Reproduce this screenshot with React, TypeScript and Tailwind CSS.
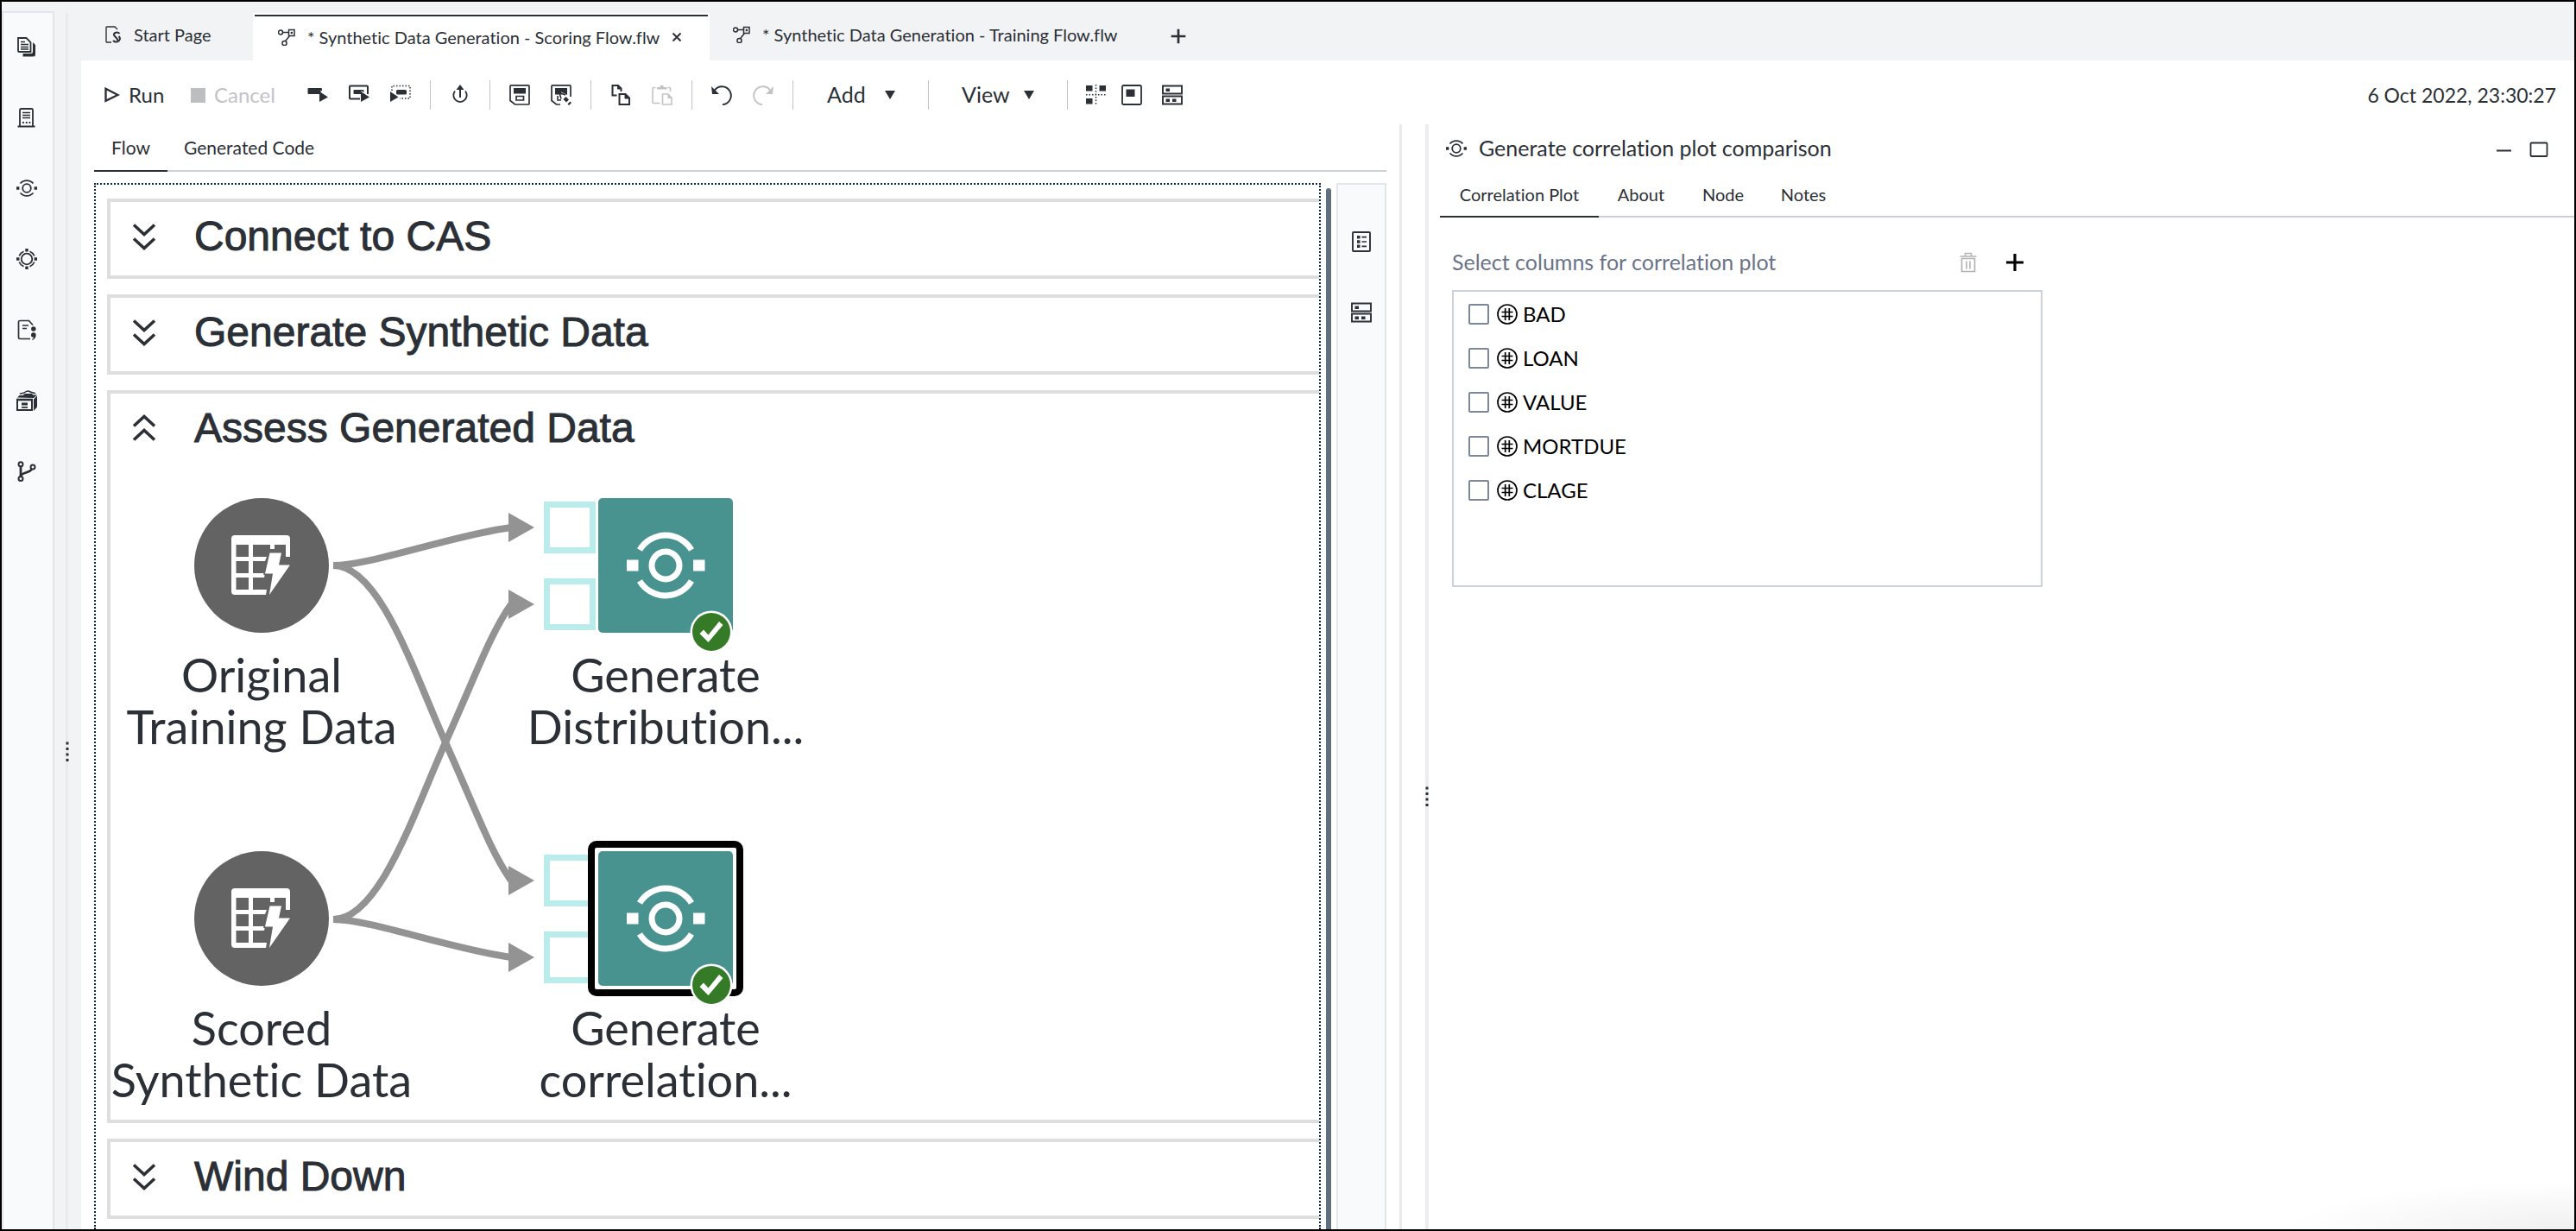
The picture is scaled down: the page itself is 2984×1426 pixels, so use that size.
import React from "react";

type IconProps = { className?: string };

const Svg = ({
  children,
  className = "size-6",
  box = "0 0 24 24",
}: {
  children: React.ReactNode;
  className?: string;
  box?: string;
}) => (
  <svg viewBox={box} className={`shrink-0 ${className}`} fill="none" stroke="currentColor" strokeWidth="2" aria-hidden="true">
    {children}
  </svg>
);

/* Rail icons */
const DocsIcon = () => (
  <Svg>
    <path d="M19 7l3 3v11a2.500 2.500 0 0 1-2.500 2.500H7.500V20H17a2 2 0 0 0 2-2z" fill="currentColor" stroke="none" />
    <path d="M2 2h9.500l5 5v11H3a1 1 0 0 1-1-1z" strokeWidth="1.8" />
    <path d="M5 6.500h5M5 9.500h9M5 12.500h9M5 15h9" strokeWidth="1.500" />
  </Svg>
);
const ServerIcon = () => (
  <Svg>
    <path d="M4 22V3.500A1.500 1.500 0 0 1 5.500 2h12A1.500 1.500 0 0 1 19 3.500V22M1.500 22.500h20" strokeWidth="1.8" />
    <path d="M7 6.500h9M7 9.500h9M7 12.500h9" strokeWidth="1.600" />
    <path d="M7 18h1.800M10.800 18h1.800M14.500 18h1.800" strokeWidth="1.800" />
  </Svg>
);
const StepIcon = ({ className }: IconProps) => (
  <Svg className={className}>
    <circle cx="12" cy="12" r="4.800" strokeWidth="1.800" />
    <path d="M4.500 6.500a10 10 0 0 1 15 0M4.500 17.500a10 10 0 0 0 15 0" strokeWidth="1.800" />
    <path d="M0 10.300h3.400v3.400H0zM20.600 10.300H24v3.400h-3.400z" fill="currentColor" stroke="none" />
  </Svg>
);
const TargetIcon = () => (
  <Svg>
    <circle cx="12" cy="12" r="6.300" strokeWidth="1.800" />
    <path d="M3.200 8.500a9.500 9.500 0 0 1 5.300-5.300M15.500 3.200a9.500 9.500 0 0 1 5.300 5.300M3.200 15.500a9.500 9.500 0 0 0 5.300 5.300M15.500 20.800a9.500 9.500 0 0 0 5.300-5.300" strokeWidth="1.700" />
    <path d="M10.300 0h3.400v3.400h-3.400zM10.300 20.600h3.400V24h-3.400zM0 10.300h3.400v3.400H0zM20.600 10.300H24v3.400h-3.400z" fill="currentColor" stroke="none" />
  </Svg>
);
const SnippetIcon = () => (
  <Svg>
    <path d="M16 22.500H4A1.500 1.500 0 0 1 2.500 21V3A1.500 1.500 0 0 1 4 1.500h10.500l4.500 5" strokeWidth="1.700" />
    <path d="M7 7h7M7 10.500h5" strokeWidth="1.600" />
    <circle cx="19.800" cy="11" r="2.700" fill="currentColor" stroke="none" />
    <path d="M17 18a2.800 2.800 0 1 1 5.600 .3c0 2.800-1.600 4.800-4 5.700l-.6-1c1.300-.7 2-1.400 2-2.300a2.700 2.700 0 0 1-3-2.700z" fill="currentColor" stroke="none" />
  </Svg>
);
const DrawerIcon = () => (
  <Svg>
    <path d="M0 9.800h19V24H0zM20 24l4-4.500V6.500l-4 4z" fill="currentColor" stroke="none" />
    <path d="M1 8.500l2.500-2.500h4l2.500-2h8l1.500 1.500H24L20 9z" fill="currentColor" stroke="none" />
    <path d="M4 4.500c2-2 4-.5 5-1.500 2-2 5-2.500 7-1 2 1 4 .5 6 2" strokeWidth="1.500" />
    <path d="M2 12.300h15V22H2z" fill="#f9fafc" stroke="none" />
    <path d="M6 14.500h7v3H6zM6 19h7v1.700H6z" fill="currentColor" stroke="none" />
  </Svg>
);
const BranchIcon = () => (
  <Svg>
    <circle cx="5" cy="3.800" r="2.500" />
    <circle cx="5" cy="20.500" r="2.500" />
    <circle cx="19" cy="7" r="2.500" />
    <path d="M5 6v12" strokeWidth="2.800" />
    <path d="M5 17.500c1-5 11-3 13-8.500" strokeWidth="2.600" />
  </Svg>
);

/* Tab icons */
const StartIcon = () => (
  <Svg className="size-5" box="0 0 20 20">
    <path d="M8 19H3a1 1 0 0 1-1-1V2a1 1 0 0 1 1-1h9l3 3" strokeWidth="1.400" />
    <path d="M17.500 9c-2-2.500-7-1.500-6.500 1.500.4 2 5 4 4 6.500" strokeWidth="2" />
    <path d="M16.500 12c2.500 2 1.500 6-2 6.500-2 .3-3.500-.5-4.500-1.500" strokeWidth="2" />
  </Svg>
);
const FlowIcon = () => (
  <Svg className="size-5" box="0 0 20 20">
    <circle cx="3" cy="4.500" r="2.500" strokeWidth="1.500" />
    <circle cx="7.500" cy="17" r="2.600" strokeWidth="1.500" />
    <path d="M12.500 1.500h6.500v7h-6.500zM5.500 4.500h7M13.500 8.500l-5 6.200" strokeWidth="1.500" />
    <path d="M14.700 3.800h2.300v2.400h-2.300z" fill="currentColor" stroke="none" />
  </Svg>
);

/* Toolbar icons */
const RunNodeIcon = () => (
  <Svg>
    <path d="M1.500 4h14.500a1 1 0 0 1 1 1v2.500l-1.500-1V11H1.500a1 1 0 0 1-1-1V5a1 1 0 0 1 1-1z" fill="currentColor" stroke="none" />
    <path d="M14 8l10 6.500-10 5.500z" fill="currentColor" stroke="none" />
  </Svg>
);
const RunFromIcon = () => (
  <Svg>
    <path d="M13 16.500H2a1 1 0 0 1-1-1V2.500a1 1 0 0 1 1-1h19a1 1 0 0 1 1 1V11" />
    <path d="M6.500 6h10a1 1 0 0 1 1 1v2l-3-2v4h-8a1 1 0 0 1-1-1V7a1 1 0 0 1 1-1z" fill="currentColor" stroke="none" />
    <path d="M14 8l10 6.500L14 20z" fill="currentColor" stroke="none" />
  </Svg>
);
const RunSelIcon = () => (
  <Svg>
    <path d="M2 7V1.500h21V16H11" strokeWidth="1.500" strokeDasharray="1.500 2" />
    <rect x="7" y="6" width="12" height="5.500" rx="1.500" fill="currentColor" stroke="none" />
    <path d="M0 8l9.500 6.500L0 20z" fill="currentColor" stroke="none" />
  </Svg>
);
const ShareIcon = () => (
  <Svg>
    <path d="M6 7.500a7.700 7.700 0 1 0 12 0" strokeWidth="1.800" />
    <path d="M12 15V4" />
    <path d="M12 0l4.500 6h-9z" fill="currentColor" stroke="none" />
  </Svg>
);
const SaveIcon = () => (
  <Svg>
    <path d="M2 .9h20a1 1 0 0 1 1 1V22a1 1 0 0 1-1 1H6.500L1 18.500V2a1 1 0 0 1 1-1.100z" strokeWidth="1.700" />
    <path d="M5 4h14v6.500H5z" fill="currentColor" stroke="none" />
    <path d="M8 13.500h8.500v4.500H8z" strokeWidth="1.700" />
  </Svg>
);
const SaveAsIcon = () => (
  <Svg>
    <path d="M11 23H6.500L1 18.500V2a1 1 0 0 1 1-1.100h20a1 1 0 0 1 1 1V14" strokeWidth="1.700" />
    <path d="M5 4h14v8L12 8.500l1 3H5z" fill="currentColor" stroke="none" />
    <path d="M8 13v5h4M10 9.500l7 2.500M10 9.500l2 7" strokeWidth="1.600" />
    <path d="M17.500 14l3.500 3.500-3 3-3.500-3.500zM22.500 19.500l1.500 1.500-3 3-1.500-1.500z" fill="currentColor" stroke="none" />
  </Svg>
);
const CopyIcon = () => (
  <Svg>
    <path d="M7.500 12.500H2.500V1h6.500l3.500 3.500v3.500" />
    <path d="M10.500 11h7l4.500 4.500V23H10.500z" />
    <path d="M8.500 1v4h4zM17 11v5h5z" fill="currentColor" strokeWidth="1" />
  </Svg>
);
const PasteIcon = () => (
  <Svg>
    <path d="M9.500 21.500H2a1 1 0 0 1-1-1V4.500a1 1 0 0 1 1-1h2.500M18.500 3.500h2a1 1 0 0 1 1 1V8" strokeWidth="1.600" />
    <path d="M6 5.500V3h3.500a2.200 2.200 0 0 1 4.400 0h3.600v2.500z" fill="currentColor" stroke="none" />
    <path d="M12.500 11h6.500l4 4.500V23H12.500z" strokeWidth="1.600" />
    <path d="M18.500 11v5h4.500z" fill="currentColor" stroke="none" />
  </Svg>
);
const UndoIcon = ({ className = "size-6" }: IconProps) => (
  <Svg className={className}>
    <path d="M3.500 7a10.500 10.500 0 1 1 9.500 16.200" strokeWidth="1.900" />
    <path d="M0 2l1 9h8z" fill="currentColor" stroke="none" />
  </Svg>
);
const ArrangeIcon = () => (
  <Svg>
    <path d="M0 1h7.500v6.500H0zM15.500 1H23v6.500h-7.500zM0 16h7.500v6.500H0z" fill="currentColor" stroke="none" />
    <path d="M11.500 0v24M0 11.800h24" strokeWidth="1.500" strokeDasharray="1.500 2" />
  </Svg>
);
const FitIcon = () => (
  <Svg>
    <rect x="1" y="1" width="22" height="22" rx="1.500" strokeWidth="1.800" />
    <path d="M5.500 5.500H15.500V14H5.500z" fill="currentColor" stroke="none" />
  </Svg>
);
const RowsIcon = () => (
  <Svg>
    <path d="M1 1.500h22v9H1zM1 13.500h22v9H1z" strokeWidth="1.900" />
    <path d="M4.500 4.500h4.500v3.500H4.500zM4.500 16.500h4.500V20H4.500zM12 16.500h4.500V20H12z" fill="currentColor" stroke="none" />
  </Svg>
);
const ListIcon = () => (
  <Svg>
    <rect x="2" y="1" width="20" height="22" rx="1" strokeWidth="1.900" />
    <path d="M7 5h3.500v3.500H7zM7 10.300h3.500v3.500H7zM7 15.600h3.500v3.500H7z" fill="currentColor" stroke="none" />
    <path d="M12.500 6.700H18M12.500 12H18M12.500 17.400H18" strokeWidth="1.700" />
  </Svg>
);
const TrashIcon = () => (
  <Svg>
    <path d="M2.500 5h19M8.500 4.500V1.500h7v3" strokeWidth="1.600" />
    <path d="M4.500 7.500h15v15h-15z" strokeWidth="1.700" />
    <path d="M10 10.500v9M14 10.500v9" strokeWidth="1.600" />
  </Svg>
);
const PlusIcon = ({ className }: IconProps) => (
  <Svg className={className}>
    <path d="M12 2v20M2 12h20" strokeWidth="3.200" />
  </Svg>
);
const HashIcon = () => (
  <Svg>
    <circle cx="12" cy="12" r="11" strokeWidth="1.700" />
    <path d="M9.700 5v14M14.300 5v14M5.500 9.500h13M5.500 14.500h13" strokeWidth="1.700" />
  </Svg>
);
const Caret = () => (
  <Svg className="size-3" box="0 0 12 12">
    <path d="M0 1h12L6 11z" fill="currentColor" stroke="none" />
  </Svg>
);
const Dots = () => (
  <Svg className="h-6 w-1" box="0 0 4 24">
    <path d="M2 .5v3M2 7v3M2 13.500v3M2 20v3" strokeWidth="3" />
  </Svg>
);

const IconButton = ({ label, children, className = "" }: { label: string; children: React.ReactNode; className?: string }) => (
  <button type="button" aria-label={label} className={`grid size-6 shrink-0 place-items-center ${className}`}>
    {children}
  </button>
);

const Separator = () => <span className="h-[34px] w-px shrink-0 bg-[#bfc4cf]" />;

function Rail() {
  const items: [string, React.ReactNode][] = [
    ["Open items", <DocsIcon />],
    ["Servers", <ServerIcon />],
    ["Steps", <StepIcon />],
    ["Tasks", <TargetIcon />],
    ["Snippets", <SnippetIcon />],
    ["Libraries", <DrawerIcon />],
    ["Git repositories", <BranchIcon />],
  ];
  return (
    <nav aria-label="Navigation" className="mt-[11px] flex w-[61px] shrink-0 flex-col items-center gap-[58px] border-2 border-b-0 border-[#e3e5eb] bg-[#f9fafc] pt-[27px] pr-[3px]">
      {items.map(([label, icon]) => (
        <IconButton key={label} label={label}>
          {icon}
        </IconButton>
      ))}
    </nav>
  );
}

function FileTabs() {
  return (
    <div className="flex h-[68px] shrink-0 items-stretch text-[20px]">
      <button type="button" className="flex w-[199px] items-center gap-3.5 pt-2 pl-[27px]">
        <StartIcon />
        Start Page
      </button>
      <div className="mt-[13px] flex w-[529px] items-center border-x-2 border-t-2 border-white bg-white">
        <div className="flex h-full flex-1 items-center border-t-2 border-[#2b2f36] pb-1 pl-[27px]">
          <button type="button" className="flex items-center gap-3.5 whitespace-nowrap">
            <FlowIcon />
            * Synthetic Data Generation - Scoring Flow.flw
          </button>
          <button type="button" aria-label="Close tab" className="ml-3.5">
            <Svg className="size-3" box="0 0 12 12">
              <path d="M1.500 1.500l9 9M10.500 1.500l-9 9" />
            </Svg>
          </button>
        </div>
      </div>
      <button type="button" className="flex items-center gap-3.5 pt-2 pl-[27px] whitespace-nowrap">
        <FlowIcon />
        * Synthetic Data Generation - Training Flow.flw
      </button>
      <button type="button" aria-label="New tab" className="ml-[60px] pt-3">
        <PlusIcon className="size-5" />
      </button>
    </div>
  );
}

function Toolbar() {
  return (
    <div role="toolbar" aria-label="Flow" className="flex h-[74px] shrink-0 items-center pt-1.5 pr-[21px] pl-[27px] text-[24px]">
      <button type="button" className="flex w-[100px] items-center gap-2.5">
        <Svg className="size-[18px]" box="0 0 18 18">
          <path d="M1.500 1.800v14L15.500 9z" strokeWidth="2.400" />
        </Svg>
        Run
      </button>
      <button type="button" disabled className="flex w-[135px] items-center gap-2.5 text-[#c2c3c5]">
        <span className="size-[17px] bg-[#bdbebf]" />
        Cancel
      </button>
      <div className="flex items-center gap-[22px]">
        <div className="flex gap-6">
          <IconButton label="Run node"><RunNodeIcon /></IconButton>
          <IconButton label="Run from node"><RunFromIcon /></IconButton>
          <IconButton label="Run selection"><RunSelIcon /></IconButton>
        </div>
        <Separator />
        <IconButton label="Export"><ShareIcon /></IconButton>
        <Separator />
        <div className="flex gap-6">
          <IconButton label="Save"><SaveIcon /></IconButton>
          <IconButton label="Save as"><SaveAsIcon /></IconButton>
        </div>
        <Separator />
        <div className="flex gap-6">
          <IconButton label="Copy"><CopyIcon /></IconButton>
          <IconButton label="Paste" className="text-[#c2c3c5]"><PasteIcon /></IconButton>
        </div>
        <Separator />
        <div className="flex gap-6">
          <IconButton label="Undo"><UndoIcon /></IconButton>
          <IconButton label="Redo" className="text-[#c2c3c5]"><UndoIcon className="size-6 -scale-x-100" /></IconButton>
        </div>
        <Separator />
      </div>
      <button type="button" aria-haspopup="menu" className="flex w-[156px] items-center justify-between pr-[38px] pl-[39px] text-[25px]">
        Add
        <Caret />
      </button>
      <Separator />
      <button type="button" aria-haspopup="menu" className="flex w-[160px] items-center justify-between pr-[38px] pl-[38px] text-[25px]">
        View
        <Caret />
      </button>
      <Separator />
      <div className="ml-[21px] flex items-center">
        <IconButton label="Arrange nodes"><ArrangeIcon /></IconButton>
        <IconButton label="Fit to window" className="ml-[17px]"><FitIcon /></IconButton>
        <IconButton label="Swimlanes" className="ml-[23px]"><RowsIcon /></IconButton>
      </div>
      <time className="ml-auto text-[23px]">6 Oct 2022, 23:30:27</time>
    </div>
  );
}

const Chevrons = ({ up }: { up?: boolean }) => (
  <Svg className={up ? "h-8 w-7 rotate-180" : "h-8 w-7"} box="0 0 28 32">
    <path d="M2 2.500l12 11 12-11M2 18.500l12 11 12-11" strokeWidth="3.600" />
  </Svg>
);

function Lane({ title, open, children }: { title: string; open?: boolean; children?: React.ReactNode }) {
  return (
    <section className="shrink-0 border-4 border-r-0 border-[#dedede] bg-white">
      <button type="button" aria-expanded={!!open} className="flex h-[85px] w-full items-center gap-11 pb-[5px] pl-[25px]">
        <Chevrons up={open} />
        <h2 className="font-[Liberation_Sans,Arial,sans-serif] text-[48px] leading-[56px] [-webkit-text-stroke:1px_#2b2f36]">{title}</h2>
      </button>
      {children}
    </section>
  );
}

const Badge = () => (
  <svg viewBox="0 0 50 50" className="absolute right-0 -bottom-6 size-[50px]" aria-label="Completed">
    <circle cx="25" cy="25" r="24.500" fill="#fff" />
    <circle cx="25" cy="25" r="22" fill="#357a26" />
    <path d="M11.500 27l4.500-4.500 5.500 6 12.500-15.500 4.500 4L21.500 37z" fill="#fff" />
  </svg>
);

const TableNode = () => (
  <svg viewBox="0 0 156 156" className="size-[156px]" aria-hidden="true">
    <circle cx="78" cy="78" r="78" fill="#636363" />
    <path
      fillRule="evenodd"
      fill="#fff"
      d="M47 43h60a4 4 0 0 1 4 4v21h-5V54h-13v5h-5v-5h-20v14h16l-2 5H68v14h14l-1 5H68v14h16l-1 6H47a4 4 0 0 1-4-4V47a4 4 0 0 1 4-4zM48.500 54v14H63V54zM48.500 73v14H63V73zM48.500 92v14H63V92z"
    />
    <path d="M87.500 63.500h13.500l-3 14h13L87 112l4-24.500h-9z" fill="#fff" stroke="#636363" strokeWidth="3" paintOrder="stroke" />
  </svg>
);

const StepNode = () => (
  <svg viewBox="0 0 156 156" className="size-[156px]" aria-hidden="true">
    <rect width="156" height="156" rx="5" fill="#48928f" />
    <g fill="none" stroke="#fff" strokeWidth="7">
      <circle cx="78" cy="78" r="16" />
      <path d="M48 60a35 35 0 0 1 60 0M48 96a35 35 0 0 0 60 0" />
    </g>
    <path d="M33 71.500h13.500v13H33zM110 71.500h13.500v13H110z" fill="#fff" />
  </svg>
);

const Port = () => <span className="h-[60px] w-[60px] border-[7px] border-[#baeceb]" />;

function NodeLabel({ lines }: { lines: [string, string] }) {
  return (
    <p className="mt-[19px] text-center text-[54px] leading-[60px] whitespace-nowrap">
      {lines[0]}
      <br />
      {lines[1]}
    </p>
  );
}

function DataNode({ lines, place }: { lines: [string, string]; place: string }) {
  return (
    <div className={`absolute flex w-[350px] flex-col items-center ${place}`}>
      <TableNode />
      <NodeLabel lines={lines} />
    </div>
  );
}

function TaskNode({ lines, place, selected }: { lines: [string, string]; place: string; selected?: boolean }) {
  return (
    <div className={`absolute flex w-[350px] flex-col items-center ${place}`}>
      <div className="relative">
        <div className="absolute top-1 -left-[63px] flex flex-col gap-[29px]">
          <Port />
          <Port />
        </div>
        {selected && <span className="absolute -inset-3 rounded-[10px] border-8 border-black bg-white" />}
        <div className="relative">
          <StepNode />
          <Badge />
        </div>
      </div>
      <NodeLabel lines={lines} />
    </div>
  );
}

/* Edge coordinates share the origin of the lane body. */
function Diagram() {
  return (
    <div className="relative h-[756px]">
      <svg viewBox="0 0 700 756" className="absolute top-0 left-0 h-[756px] w-[700px]" aria-hidden="true">
        <g fill="none" stroke="#939393" strokeWidth="8">
          <path d="M258 114C302 114 392 80 464 70" />
          <path d="M258 114C312 114 352 239 388 319S440 445 464 479" />
          <path d="M258 524C302 524 392 558 464 568" />
          <path d="M258 524C312 524 352 399 388 319S440 193 464 159" />
        </g>
        <path d="M461 53l30 17-30 17zM461 142l30 17-30 17zM461 462l30 17-30 17zM461 551l30 17-30 17z" fill="#939393" />
      </svg>
      <DataNode place="top-9 left-0" lines={["Original", "Training Data"]} />
      <DataNode place="top-[445px] left-0" lines={["Scored", "Synthetic Data"]} />
      <TaskNode place="top-9 left-[468px]" lines={["Generate", "Distribution..."]} />
      <TaskNode place="top-[445px] left-[468px]" lines={["Generate", "correlation..."]} selected />
    </div>
  );
}

function FlowPane() {
  return (
    <div className="flex min-h-0 min-w-0 flex-[1497] flex-col px-[15px]">
      <div role="tablist" className="flex h-[55px] shrink-0 border-b-2 border-[#ccd2d8] text-[21px]">
        <button type="button" role="tab" aria-selected="true" className="-mb-0.5 w-[85px] border-b-2 border-[#2b2f36]">
          Flow
        </button>
        <button type="button" role="tab" aria-selected="false" className="px-[19px]">
          Generated Code
        </button>
      </div>
      <div className="mt-[13px] flex min-h-0 flex-1">
        <div className="flex min-w-0 flex-1 flex-col gap-[18px] overflow-hidden border-2 border-b-0 border-dotted border-[#0d2547] pt-4 pl-[13px]">
          <Lane title="Connect to CAS" />
          <Lane title="Generate Synthetic Data" />
          <Lane title="Assess Generated Data" open>
            <Diagram />
          </Lane>
          <Lane title="Wind Down" />
        </div>
        <div className="mt-1.5 ml-1.5 w-1.5 shrink-0 rounded-t-full bg-[#61707f]" />
        <div className="ml-1.5 flex w-[58px] shrink-0 flex-col items-center gap-[58px] border-2 border-b-0 border-[#e2e5ea] bg-[#f9fafc] pt-[54px]">
          <IconButton label="Node list"><ListIcon /></IconButton>
          <IconButton label="Swimlane view"><RowsIcon /></IconButton>
        </div>
      </div>
    </div>
  );
}

const columns = ["BAD", "LOAN", "VALUE", "MORTDUE", "CLAGE"];

function DetailPane() {
  return (
    <div className="flex min-w-0 flex-[1314] flex-col pl-[13px]">
      <header className="flex h-[55px] shrink-0 items-center gap-3.5 pr-[30px] pl-[7px] text-[25px]">
        <StepIcon className="size-6" />
        <h1>Generate correlation plot comparison</h1>
        <button type="button" aria-label="Minimize" className="ml-auto">
          <Svg className="size-5" box="0 0 20 20">
            <path d="M2 12.500h17" />
          </Svg>
        </button>
        <button type="button" aria-label="Maximize" className="ml-1.5">
          <Svg className="h-5 w-[22px]" box="0 0 22 20">
            <rect x="1.500" y="3.500" width="19" height="15.500" rx="1" strokeWidth="1.800" />
          </Svg>
        </button>
      </header>
      <div role="tablist" className="flex h-[53px] shrink-0 border-b-2 border-[#cdced6] text-[20px]">
        <button type="button" role="tab" aria-selected="true" className="-mb-0.5 w-[184px] border-b-2 border-[#2b2f36]">
          Correlation Plot
        </button>
        <button type="button" role="tab" aria-selected="false" className="w-[98px]">About</button>
        <button type="button" role="tab" aria-selected="false" className="w-[92px]">Node</button>
        <button type="button" role="tab" aria-selected="false" className="w-[94px]">Notes</button>
      </div>
      <fieldset className="mt-[34px] ml-3.5 w-[684px] max-w-full">
        <div className="flex h-[36px] items-center">
          <span id="columns-label" className="text-[25px] text-[#6a7387]">Select columns for correlation plot</span>
          <IconButton label="Remove column" className="ml-auto text-[#b4b4b4]"><TrashIcon /></IconButton>
          <IconButton label="Add column" className="mr-5 ml-[30px] text-black"><PlusIcon className="size-6" /></IconButton>
        </div>
        <ul aria-labelledby="columns-label" className="mt-3.5 h-[344px] border-2 border-[#cdd1dc] text-[24px] text-black">
          {columns.map((name) => (
            <li key={name}>
              <label className="flex h-[51px] items-center pl-[17px]">
                <input type="checkbox" className="size-6 appearance-none rounded-[2px] border-2 border-[#7b879b] bg-white" />
                <span className="mr-1.5 ml-[9px]">
                  <HashIcon />
                </span>
                {name}
              </label>
            </li>
          ))}
        </ul>
      </fieldset>
    </div>
  );
}

export default function App() {
  return (
    <div className="relative flex h-screen overflow-hidden border-2 border-black bg-[#f2f3f5] font-[Lato,sans-serif] text-[#2b2f36] [font-variant-ligatures:none]">
      <Rail />
      <div className="mt-[13px] ml-[13px] flex w-[3px] shrink-0 justify-center bg-[#e9eaec] pt-[844px]">
        <Dots />
      </div>
      <div className="ml-[15px] flex min-w-0 flex-1 flex-col">
        <FileTabs />
        <main className="flex min-h-0 flex-1 flex-col bg-white">
          <Toolbar />
          <div className="flex min-h-0 flex-1">
            <FlowPane />
            <div className="w-[3px] shrink-0 bg-[#ebebed]" />
            <div className="ml-[27px] flex w-1 shrink-0 justify-start bg-[#ebecee] pt-[767px]">
              <Dots />
            </div>
            <DetailPane />
          </div>
        </main>
      </div>
      <div className="pointer-events-none absolute right-0 bottom-0 h-14 w-[340px] bg-radial-[at_100%_100%] from-black/6 to-transparent to-70%" />
    </div>
  );
}
